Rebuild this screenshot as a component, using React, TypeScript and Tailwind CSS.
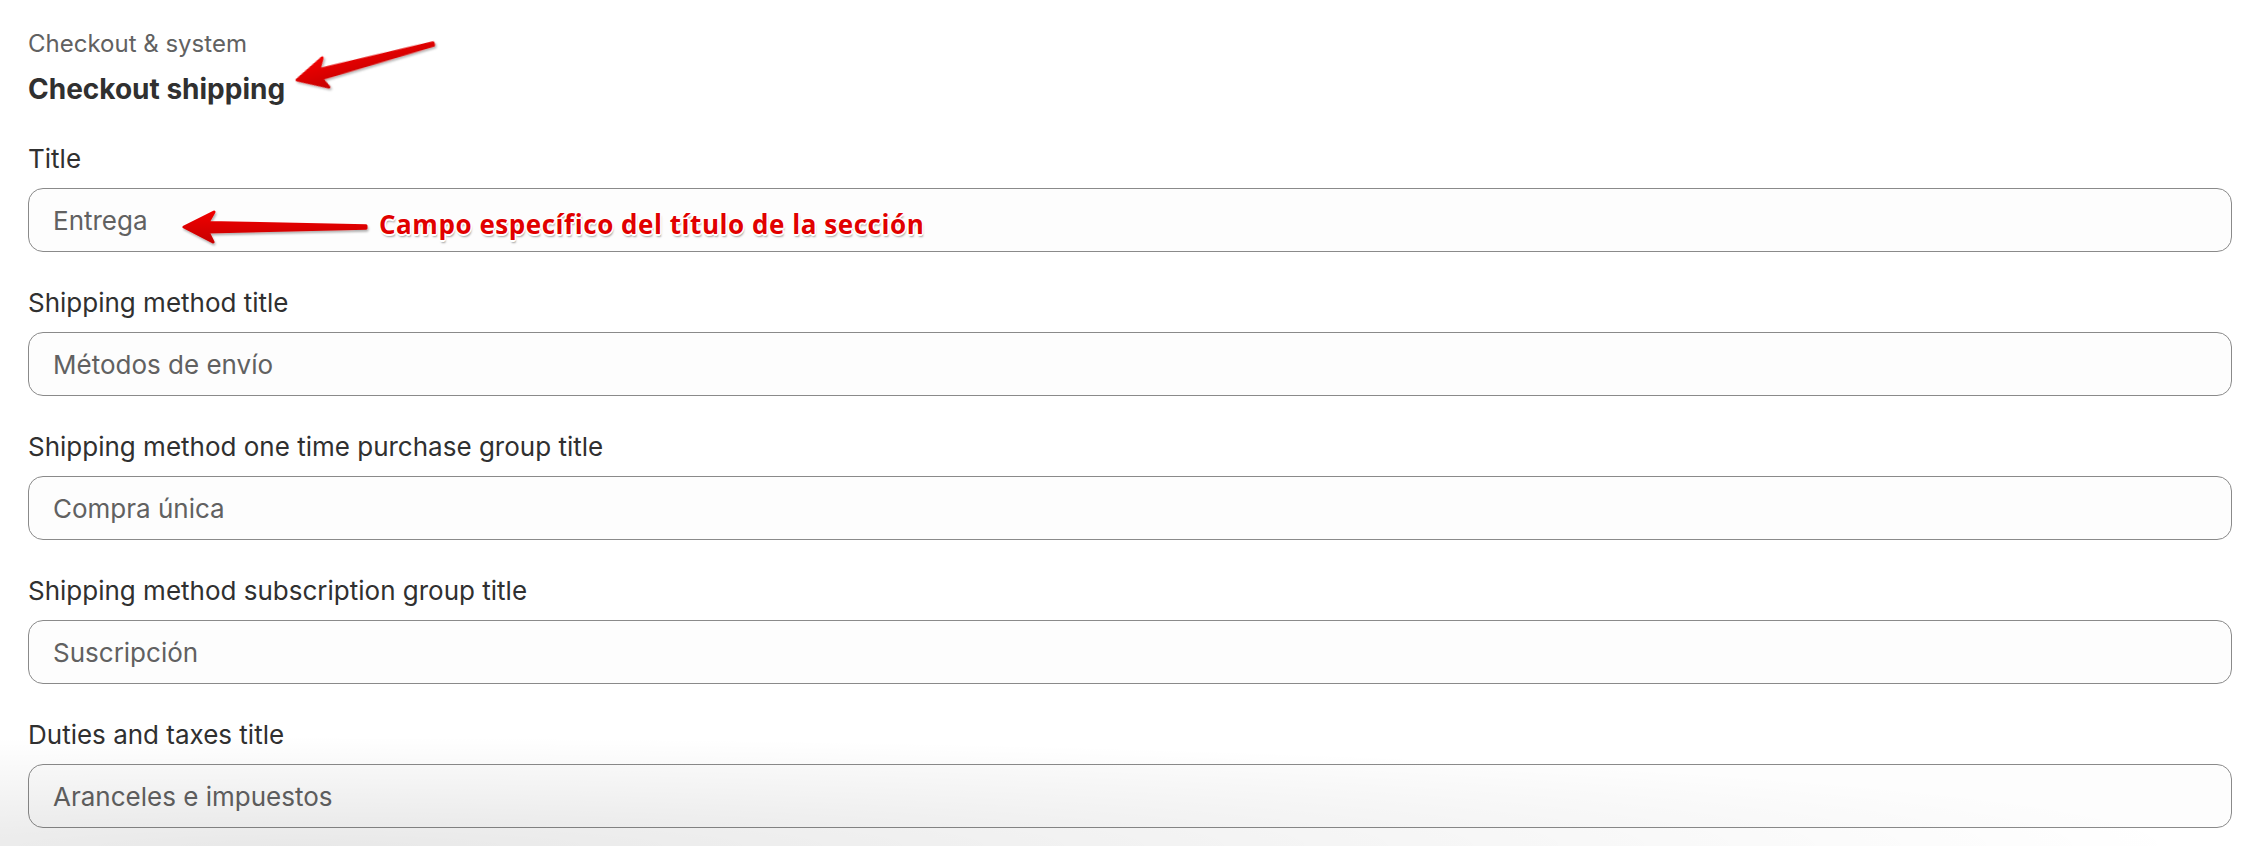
import React from "react";

const fields = [
    { label: "Title", value: "Entrega" },
    { label: "Shipping method title", value: "Métodos de envío" },
    { label: "Shipping method one time purchase group title", value: "Compra única" },
    { label: "Shipping method subscription group title", value: "Suscripción" },
    { label: "Duties and taxes title", value: "Aranceles e impuestos" },
]

// red annotation arrow, drawn pointing left from the tip at 0,0
function Arrow({ length, transform }: { length: number, transform: string }) {
    const pts = `0,0 30,-15 24,-4.5 ${length},-1.2 ${length},1.2 24,5 29,15`
    return <g transform={transform} filter="url(#arrowShadow)">
        <polygon points={pts} fill="url(#arrowFill)" stroke="url(#arrowFill)" strokeWidth={3} strokeLinejoin="round" />
    </g>
}

export default function App() {
    return <div className="relative h-[846px] overflow-hidden bg-white font-['Inter',sans-serif]">
        <div className="flex flex-col px-[28px] pt-[28px]">
            <p className="text-[24px] leading-[32px] text-[#616161]">Checkout &amp; system</p>
            <p className="mt-[13px] text-[28px] leading-[32px] font-bold text-[#303030]">Checkout shipping</p>

            <div className="mt-[38px] flex flex-col gap-[35px]">
                {fields.map((f) => (
                    <div key={f.label} className="flex flex-col gap-[13px]">
                        <label className="text-[26px] leading-[32px] text-[#303030]">{f.label}</label>
                        <div className="flex items-center h-[64px] px-[24px] rounded-[15px] border border-[#8a8a8a] bg-[#fdfdfd] text-[26px] text-[#616161]">
                            {f.value}
                        </div>
                    </div>
                ))}
            </div>
        </div>

        {/* annotations */}
        <p className="absolute left-[379px] top-[211px] text-[26px] leading-[26px] tracking-[0.55px] font-bold text-[#e10000] font-['Open_Sans',sans-serif] [text-shadow:1.5px_0_0_#fff,-1.5px_0_0_#fff,0_1.5px_0_#fff,0_-1.5px_0_#fff,1px_1px_0_#fff,-1px_-1px_0_#fff,1px_-1px_0_#fff,-1px_1px_0_#fff,1px_3px_2px_rgba(0,0,0,0.35)]">
            Campo específico del título de la sección
        </p>
        <svg className="absolute inset-0 w-full h-full pointer-events-none" width="2260" height="846">
            <defs>
                <linearGradient id="arrowFill" x1="0" y1="0" x2="0" y2="1">
                    <stop offset="0" stopColor="#f00000" />
                    <stop offset="1" stopColor="#c80000" />
                </linearGradient>
                <filter id="arrowShadow" x="-20%" y="-50%" width="140%" height="200%">
                    <feDropShadow dx="1" dy="2" stdDeviation="1.2" floodColor="#000" floodOpacity="0.3" />
                </filter>
            </defs>
            <Arrow length={141} transform="translate(297,80) rotate(-14.8)" />
            <Arrow length={182} transform="translate(184,227)" />
        </svg>

        {/* grey shade at the bottom edge */}
        <div className="absolute bottom-0 left-0 right-0 h-[120px] pointer-events-none bg-[radial-gradient(ellipse_1900px_110px_at_300px_100%,rgba(0,0,0,0.09),rgba(0,0,0,0.04)_55%,transparent)]" />
    </div>
}
